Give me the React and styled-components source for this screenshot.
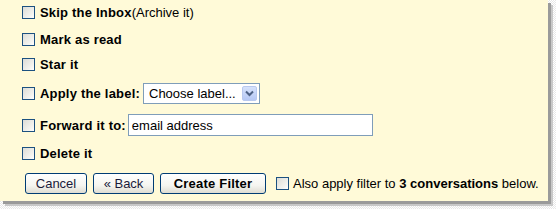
import React from "react";
import styled, { createGlobalStyle } from "styled-components";

const Global = createGlobalStyle`
  html, body { margin: 0; padding: 0; background: #ffffff; }
  body { font-family: "Liberation Sans", Arial, sans-serif; font-size: 13px; color: #000; }
`;

const Page = styled.div`
  width: 556px;
  height: 209px;
  background-color: #fff;
  background-image:
    linear-gradient(45deg, #e8e8e8 25%, transparent 25%, transparent 75%, #e8e8e8 75%),
    linear-gradient(45deg, #e8e8e8 25%, transparent 25%, transparent 75%, #e8e8e8 75%);
  background-size: 2px 2px;
  background-position: 0 0, 1px 1px;
  overflow: hidden;
`;

const Panel = styled.div`
  width: 548px;
  height: 201px;
  box-sizing: border-box;
  padding-left: 22px;
  background-color: #fffad8;
  box-shadow: 3px 3px 0 #9a9a9a, 5px 5px 0 #c8c8c8;
  display: flex;
  flex-direction: column;
`;

const Row = styled.div`
  height: ${(p) => p.$h}px;
  display: flex;
  align-items: center;
  white-space: nowrap;
`;

const Box = styled.span`
  flex: none;
  width: 11px;
  height: 11px;
  border: 1px solid #1c5180;
  background: linear-gradient(135deg, #dcdcd7 0%, #f3f3ef 70%, #ffffff 100%);
  margin-right: ${(p) => p.$gap ?? 5}px;
`;

const Label = styled.span`
  font-weight: bold;
  letter-spacing: 0.2px;
  margin-right: ${(p) => p.$mr ?? 0}px;
`;

const Strong = styled.b`
  font-weight: bold;
`;

const Select = styled.div`
  box-sizing: border-box;
  width: 117px;
  height: 21px;
  border: 1px solid #7f9db9;
  background: #fff;
  display: flex;
  align-items: center;
  justify-content: space-between;
  padding: 0 2px 0 5px;
`;

const DropBtn = styled.span`
  width: 15px;
  height: 15px;
  box-sizing: border-box;
  border: 1px solid #b9c9ef;
  border-radius: 2px;
  background: linear-gradient(#d6e2fb, #b6c8f5);
  display: flex;
  align-items: center;
  justify-content: center;
`;

const TextInput = styled.div`
  box-sizing: border-box;
  width: 245px;
  height: 22px;
  border: 1px solid #7f9db9;
  background: #fff;
  padding-left: 3px;
  display: flex;
  align-items: center;
`;

const Button = styled.span`
  box-sizing: border-box;
  height: 21px;
  width: ${(p) => p.$w}px;
  margin-right: ${(p) => p.$mr ?? 0}px;
  border: 1px solid #003c74;
  border-radius: 3px;
  background: linear-gradient(#ffffff 0%, #f5f5f0 60%, #dedcd2 100%);
  display: flex;
  align-items: center;
  justify-content: center;
  font-weight: ${(p) => (p.$bold ? "bold" : "normal")};
  letter-spacing: ${(p) => (p.$bold ? "0.2px" : "0")};
  color: ${(p) => (p.$bold ? "#000" : "#1a1a3a")};
`;

const Buttons = styled.div`
  display: flex;
  align-items: center;
  margin-left: 3px;
`;

const Chevron = () => (
  <svg width="9" height="7" viewBox="0 0 9 7">
    <path d="M1 1.5 L4.5 5 L8 1.5" fill="none" stroke="#4d6185" strokeWidth="2" />
  </svg>
);

export default function App() {
  return (
    <Page>
      <Global />
      <Panel>
        <Row $h={25}>
          <Box />
          <Label>Skip the Inbox</Label>(Archive it)
        </Row>
        <Row $h={29}>
          <Box />
          <Label>Mark as read</Label>
        </Row>
        <Row $h={21}>
          <Box />
          <Label>Star it</Label>
        </Row>
        <Row $h={37}>
          <Box />
          <Label $mr={3}>Apply the label:</Label>
          <Select>
            Choose label...
            <DropBtn>
              <Chevron />
            </DropBtn>
          </Select>
        </Row>
        <Row $h={26}>
          <Box />
          <Label $mr={2}>Forward it to:</Label>
          <TextInput>email address</TextInput>
        </Row>
        <Row $h={30}>
          <Box />
          <Label>Delete it</Label>
        </Row>
        <Row $h={30}>
          <Buttons>
            <Button $w={62} $mr={6}>Cancel</Button>
            <Button $w={61} $mr={6}>« Back</Button>
            <Button $w={106} $mr={10} $bold>Create Filter</Button>
          </Buttons>
          <Box $gap={4} />
          <span>
            Also apply filter to <Strong>3 conversations</Strong> below.
          </span>
        </Row>
      </Panel>
    </Page>
  );
}
